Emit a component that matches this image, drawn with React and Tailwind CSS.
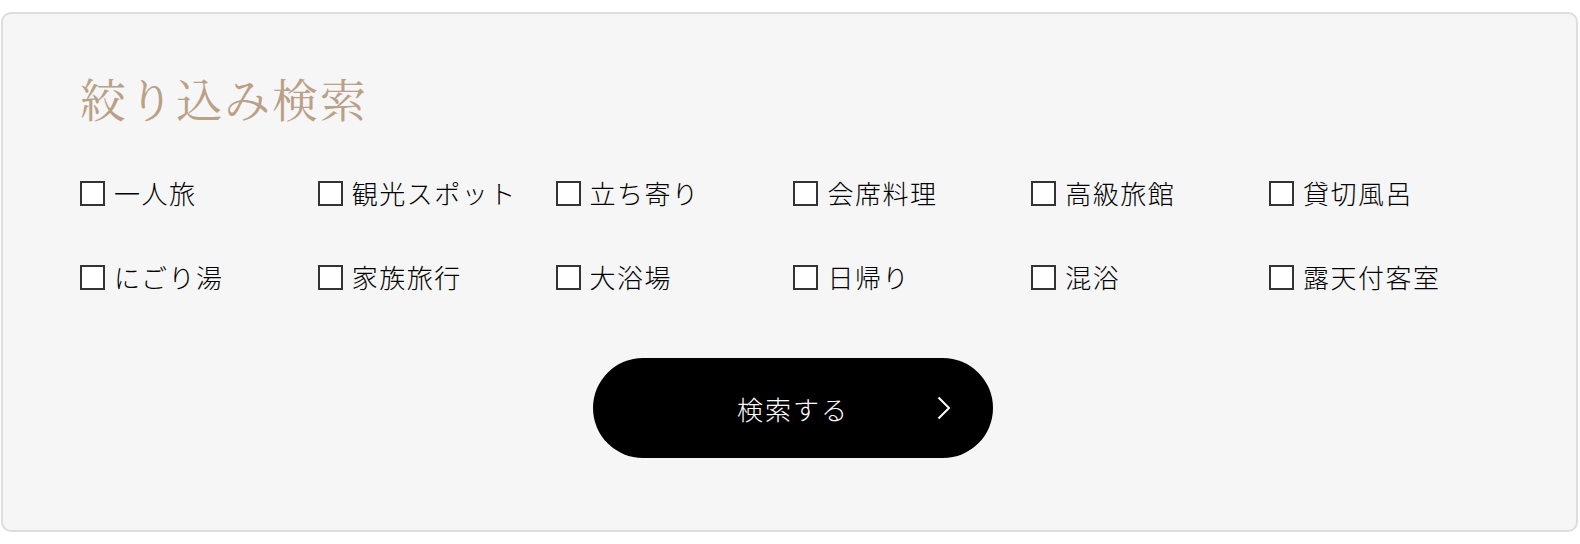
import React from 'react';

const OPTIONS = [
  '一人旅', '観光スポット', '立ち寄り', '会席料理', '高級旅館', '貸切風呂',
  'にごり湯', '家族旅行', '大浴場', '日帰り', '混浴', '露天付客室',
];

function Option({ label }) {
  return (
    <label className="flex items-center gap-[9px] cursor-pointer">
      <span className="w-[25px] h-[25px] border-2 border-[#333] bg-white shrink-0" />
      <span className="text-[26px] leading-none tracking-[1.5px] font-extralight text-black whitespace-nowrap">{label}</span>
    </label>
  );
}

export default function App() {
  return (
    <div className="w-[1580px] h-[544px] bg-white pt-[12px] pl-[1px] pr-[2px]">
      <div
        className="h-[520px] bg-[#f6f6f6] border-2 border-[#dddddd] rounded-[10px] pt-[60px] pl-[77px]"
        style={{ fontFamily: '"Noto Sans CJK JP", "Noto Sans", sans-serif' }}
      >
        <h2
          className="text-[46px] leading-none tracking-[2px] text-[#b9a086]"
          style={{ fontFamily: '"Noto Serif CJK JP", "Liberation Serif", serif' }}
        >
          絞り込み検索
        </h2>
        <div className="grid grid-cols-[repeat(6,237.8px)] gap-y-[58px] mt-[60px]">
          {OPTIONS.map((o) => (
            <Option key={o} label={o} />
          ))}
        </div>
        <div className="flex justify-center pr-[70px] mt-[68px]">
          <button className="relative w-[400px] h-[100px] rounded-full bg-black text-white flex items-center justify-center">
            <span className="text-[26px] tracking-[2px] font-extralight">検索する</span>
            <svg className="absolute right-[42px] top-1/2 -translate-y-1/2" width="14" height="24" viewBox="0 0 14 24" fill="none">
              <path d="M1.5 1.5 L12 12 L1.5 22.5" stroke="white" strokeWidth="2" />
            </svg>
          </button>
        </div>
      </div>
    </div>
  );
}
